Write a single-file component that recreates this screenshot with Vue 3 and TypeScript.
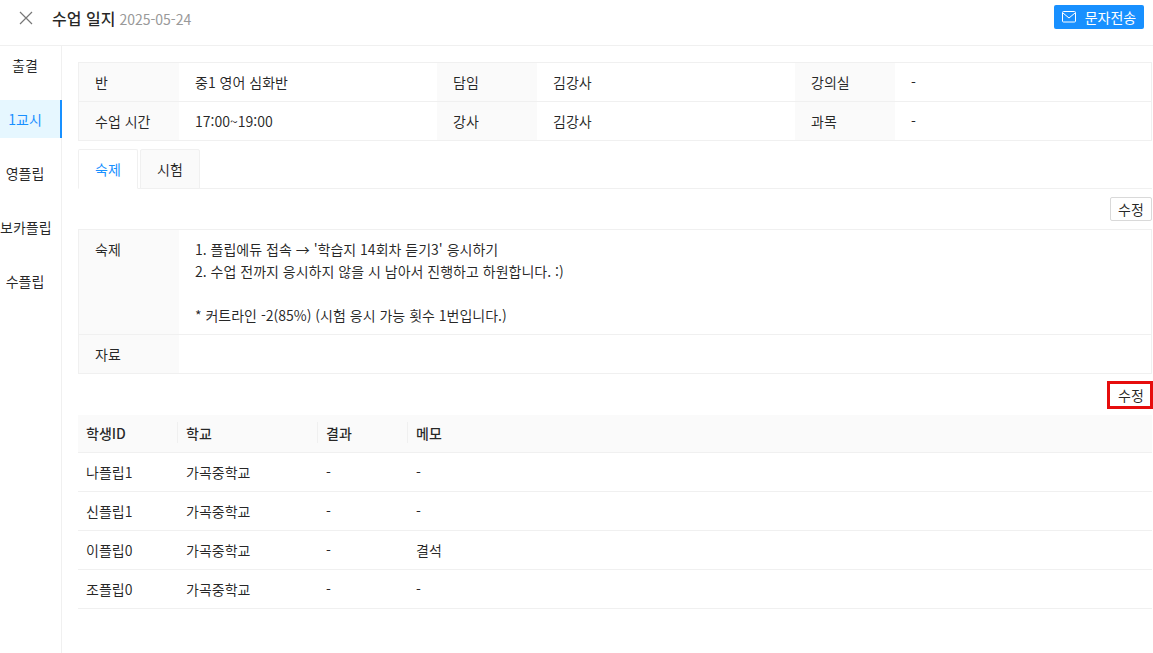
<script setup lang="ts">
const navItems = ['출결', '1교시', '영플립', '보카플립', '수플립']
const students = [
  { id: '나플립1', school: '가곡중학교', result: '-', memo: '-' },
  { id: '신플립1', school: '가곡중학교', result: '-', memo: '-' },
  { id: '이플립0', school: '가곡중학교', result: '-', memo: '결석' },
  { id: '조플립0', school: '가곡중학교', result: '-', memo: '-' },
]
const info = [
  ['반', '중1 영어 심화반', '담임', '김강사', '강의실', '-'],
  ['수업 시간', '17:00~19:00', '강사', '김강사', '과목', '-'],
]
const homework = "1. 플립에듀 접속 → '학습지 14회차 듣기3' 응시하기\n2. 수업 전까지 응시하지 않을 시 남아서 진행하고 하원합니다. :)\n\n* 커트라인 -2(85%) (시험 응시 가능 횟수 1번입니다.)"
</script>

<template>
  <div class="page" lang="ko">
    <header class="head">
      <div class="head-left">
        <svg class="close" width="14" height="14" viewBox="0 0 14 14"><path d="M1 1 13 13M13 1 1 13" stroke="#777" stroke-width="1.2" fill="none" /></svg>
        <span class="title">수업 일지</span>
        <span class="date">2025-05-24</span>
      </div>
      <button class="send">
        <svg width="14" height="12" viewBox="0 0 14 12"><rect x=".5" y=".5" width="13" height="10.5" rx="1" fill="none" stroke="#fff" /><path d="M1 2 7 7 13 2" fill="none" stroke="#fff" /></svg>
        <span>문자전송</span>
      </button>
    </header>
    <div class="body">
      <nav class="side">
        <div v-for="n in navItems" :key="n" class="nav" :class="{ active: n === '1교시' }">{{ n }}</div>
      </nav>
      <main class="main">
        <section class="desc info">
          <div v-for="(row, i) in info" :key="i" class="info-row">
            <div v-for="(c, j) in row" :key="j" class="cell" :class="j % 2 ? 'val' : 'lab'">{{ c }}</div>
          </div>
        </section>
        <div class="tabs">
          <div class="tab on">숙제</div>
          <div class="tab">시험</div>
        </div>
        <div class="actions first"><button class="edit">수정</button></div>
        <section class="desc hw">
          <div class="hw-row">
            <div class="cell lab">숙제</div>
            <div class="cell val hw-text">{{ homework }}</div>
          </div>
          <div class="hw-row">
            <div class="cell lab">자료</div>
            <div class="cell val"></div>
          </div>
        </section>
        <div class="actions second"><button class="edit marked">수정</button></div>
        <section class="table">
          <div class="tr th">
            <div class="td">학생ID</div>
            <div class="td">학교</div>
            <div class="td">결과</div>
            <div class="td">메모</div>
          </div>
          <div v-for="s in students" :key="s.id" class="tr">
            <div class="td">{{ s.id }}</div>
            <div class="td">{{ s.school }}</div>
            <div class="td">{{ s.result }}</div>
            <div class="td">{{ s.memo }}</div>
          </div>
        </section>
      </main>
    </div>
  </div>
</template>

<style>
html, body { margin: 0; background: #fff; overflow: hidden; }
</style>

<style scoped>
* { box-sizing: border-box; }
.page { width: 1153px; height: 653px; font: 14px/22px "Noto Sans CJK KR", "Noto Sans", sans-serif; color: rgba(0,0,0,.85); background: #fff; overflow: hidden; }
.head { height: 46px; border-bottom: 1px solid #f0f0f0; display: flex; justify-content: space-between; align-items: flex-start; padding: 5px 9px 0 19px; }
.head-left { display: flex; align-items: center; height: 24px; }
.close { margin-right: 19px; margin-top: 2px; }
.title { font-size: 16px; font-weight: 500; margin-top: 2px; }
.date { color: #999; margin-left: 4px; margin-top: 4px; }
.send { height: 24px; width: 90px; background: #1890ff; color: #fff; border: 0; border-radius: 2px; font: inherit; display: flex; align-items: center; justify-content: center; gap: 9px; padding: 0; }
.body { display: flex; height: 607px; }
.side { width: 62px; border-right: 1px solid #f0f0f0; flex: none; }
.nav { height: 38px; margin-bottom: 16px; line-height: 38px; text-align: center; white-space: nowrap; width: 50px; }
.nav.active { width: 62px; background: #e6f7ff; color: #1890ff; border-right: 2px solid #1890ff; padding-right: 10px; }
.main { flex: 1; padding: 16px 1px 0 16px; }
.desc { border: 1px solid #f0f0f0; }
.info-row { display: grid; grid-template-columns: 100px 258px 100px 258px 100px 1fr; height: 38px; }
.info-row + .info-row { border-top: 1px solid #f0f0f0; height: 39px; }
.cell { padding: 8px 16px; }
.lab { background: #fafafa; }
.tabs { display: flex; gap: 2px; margin-top: 8px; height: 40px; border-bottom: 1px solid #f0f0f0; }
.tab { width: 60px; height: 40px; border: 1px solid #f0f0f0; background: #fafafa; text-align: center; line-height: 38px; border-radius: 2px 2px 0 0; }
.tab.on { background: #fff; color: #1890ff; border-bottom-color: #fff; }
.actions { display: flex; justify-content: flex-end; }
.actions.first { margin-top: 8px; margin-bottom: 8px; }
.actions.second { margin-top: 9px; margin-bottom: 8px; }
.edit { width: 42px; height: 24px; background: #fff; border: 1px solid #d9d9d9; border-radius: 2px; font: inherit; color: inherit; padding: 0; }
.edit.marked { position: relative; border-color: transparent; }
.edit.marked::after { content: ""; position: absolute; inset: -3px -2px -3px -4px; border: 3px solid #e60d0d; }
.hw-row { display: grid; grid-template-columns: 100px 1fr; }
.hw-row + .hw-row { border-top: 1px solid #f0f0f0; height: 39px; }
.hw-text { white-space: pre-wrap; height: 104px; line-height: 22px; }
.tr { display: grid; grid-template-columns: 100px 140px 90px 1fr; height: 39px; border-bottom: 1px solid #f0f0f0; }
.td { padding: 8px; }
.th { background: #fafafa; height: 38px; font-weight: 500; }
.th .td { position: relative; padding-top: 7px; padding-bottom: 7px; }
.th .td + .td::before { content: ""; position: absolute; left: -1px; top: 7px; height: 21px; width: 1px; background: #f0f0f0; }
</style>
